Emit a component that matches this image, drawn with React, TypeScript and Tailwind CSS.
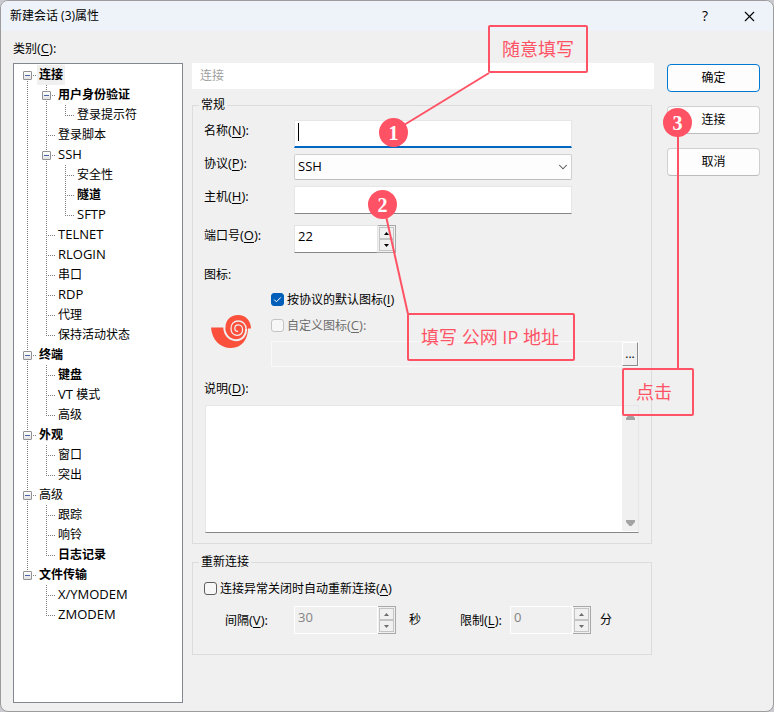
import { useState } from "react";
import type { ReactNode } from "react";
import { ChevronDown, X } from "lucide-react";

type TreeNode = {
	label: string;
	bold?: boolean;
	children?: TreeNode[];
};

const categories: TreeNode[] = [
	{
		label: "连接",
		bold: true,
		children: [
			{
				label: "用户身份验证",
				bold: true,
				children: [{ label: "登录提示符" }],
			},
			{ label: "登录脚本" },
			{
				label: "SSH",
				children: [
					{ label: "安全性" },
					{ label: "隧道", bold: true },
					{ label: "SFTP" },
				],
			},
			{ label: "TELNET" },
			{ label: "RLOGIN" },
			{ label: "串口" },
			{ label: "RDP" },
			{ label: "代理" },
			{ label: "保持活动状态" },
		],
	},
	{
		label: "终端",
		bold: true,
		children: [
			{ label: "键盘", bold: true },
			{ label: "VT 模式" },
			{ label: "高级" },
		],
	},
	{
		label: "外观",
		bold: true,
		children: [{ label: "窗口" }, { label: "突出" }],
	},
	{
		label: "高级",
		children: [
			{ label: "跟踪" },
			{ label: "响铃" },
			{ label: "日志记录", bold: true },
		],
	},
	{
		label: "文件传输",
		bold: true,
		children: [{ label: "X/YMODEM" }, { label: "ZMODEM" }],
	},
];

// One 19x20 cell of the dotted guide lines
function Guide({
	from,
	to,
	branch,
}: {
	from: number;
	to: number;
	branch?: boolean;
}) {
	return (
		<svg
			className="absolute inset-0"
			width="19"
			height="20"
			stroke="#808080"
			strokeDasharray="1 1"
			shapeRendering="crispEdges"
		>
			{to > from && <line x1="9.5" y1={from} x2="9.5" y2={to} />}
			{branch && <line x1="9" y1="10.5" x2="18" y2="10.5" />}
		</svg>
	);
}

// Latin runs are set one size larger than the Chinese text
function Mixed({ text }: { text: string }) {
	return text.split(/([A-Z/ ]+)/).map((part, i) => (
		<span key={i} className={i % 2 ? "whitespace-pre text-[13px]" : ""}>
			{part}
		</span>
	));
}

function Tree({
	nodes,
	trail = [],
	selected,
	onSelect,
}: {
	nodes: TreeNode[];
	trail?: boolean[];
	selected: string;
	onSelect: (path: string) => void;
}) {
	const [closed, setClosed] = useState<string[]>([]);

	const toggle = (label: string) => {
		setClosed((c) =>
			c.includes(label) ? c.filter((l) => l !== label) : [...c, label],
		);
	};

	return (
		<ul>
			{nodes.map((node, i) => {
				const last = i === nodes.length - 1;
				const first = i === 0 && trail.length === 0;
				const open = !closed.includes(node.label);
				return (
					<li key={node.label}>
						<div className="flex h-5 items-center">
							{trail.map((line, t) => (
								<span key={t} className="relative h-5 w-[19px] shrink-0">
									{line && <Guide from={0} to={20} />}
								</span>
							))}
							<span className="relative h-5 w-[19px] shrink-0">
								<Guide from={first ? 10 : 0} to={last ? 10 : 20} branch />
								{node.children && (
									<button
										type="button"
										aria-label={node.label}
										aria-expanded={open}
										className="absolute left-[5px] top-1.5 flex size-[9px] items-center justify-center rounded-[1px] border border-[#919191] bg-gradient-to-b from-white to-[#e2e2e2]"
										onClick={() => toggle(node.label)}
									>
										<svg width="5" height="5" fill="#4b63a7">
											<rect y="2" width="5" height="1" />
											{!open && <rect x="2" width="1" height="5" />}
										</svg>
									</button>
								)}
							</span>
							<button
								type="button"
								className={`h-5 whitespace-nowrap px-0.5 ${
									node.bold ? "font-bold" : ""
								} ${selected === node.label ? "bg-[#f0f0f0]" : ""}`}
								onClick={() => onSelect(node.label)}
							>
								<Mixed text={node.label} />
							</button>
						</div>
						{node.children && open && (
							<Tree
								nodes={node.children}
								trail={[...trail, !last]}
								selected={selected}
								onSelect={onSelect}
							/>
						)}
					</li>
				);
			})}
		</ul>
	);
}

// "(N):" with the access key underlined
function Key({ k, colon = true }: { k: string; colon?: boolean }) {
	return (
		<span className="text-[13px] leading-4">
			(<u className="underline-offset-2">{k}</u>){colon && ":"}
		</span>
	);
}

function Row({
	id,
	label,
	k,
	children,
}: {
	id: string;
	label: string;
	k: string;
	children: ReactNode;
}) {
	return (
		<div className="flex items-center pl-[11px] pr-[79px]">
			<label htmlFor={id} className="w-[90px] shrink-0 pb-2">
				{label}
				<Key k={k} />
			</label>
			{children}
		</div>
	);
}

function Spinner({
	id,
	value,
	onChange,
	disabled,
	className,
}: {
	id: string;
	value: number;
	onChange?: (value: number) => void;
	disabled?: boolean;
	className: string;
}) {
	const button =
		"flex flex-1 items-center justify-center border border-[#c4c4c4] bg-[#f0f0f0]";
	return (
		<div className={`flex h-7 ${className}`}>
			<input
				id={id}
				type="text"
				value={value}
				disabled={disabled}
				onChange={(e) => onChange?.(Number(e.target.value) || 0)}
				className="w-0 flex-1 border border-[#e4e4e4] border-b-[#868686] bg-white px-[3px] pb-1 text-[13px] disabled:border-white disabled:bg-[#f0f0f0] disabled:text-[#838383]"
			/>
			<div className="flex w-[18px] flex-col border border-l-0 border-[#a8a8a8] p-px">
				<button
					type="button"
					aria-label="增加"
					disabled={disabled}
					className={button}
					onClick={() => onChange?.(value + 1)}
				>
					<svg width="5" height="3" fill={disabled ? "#6d6d6d" : "#000"}>
						<path d="M0 3L2.5 0L5 3Z" />
					</svg>
				</button>
				<button
					type="button"
					aria-label="减少"
					disabled={disabled}
					className={button}
					onClick={() => onChange?.(value - 1)}
				>
					<svg width="5" height="3" fill={disabled ? "#6d6d6d" : "#000"}>
						<path d="M0 0L2.5 3L5 0Z" />
					</svg>
				</button>
			</div>
		</div>
	);
}

function Check({
	checked,
	onChange,
	disabled,
	children,
}: {
	checked: boolean;
	onChange?: (checked: boolean) => void;
	disabled?: boolean;
	children: ReactNode;
}) {
	return (
		<label
			className={`flex h-4 w-fit items-center gap-[3px] ${
				disabled ? "text-[#6d6d6d]" : ""
			}`}
		>
			<span className="relative flex size-[13px]">
				<input
					type="checkbox"
					checked={checked}
					disabled={disabled}
					onChange={(e) => onChange?.(e.target.checked)}
					className="size-[13px] appearance-none rounded-[3px] border border-[#5f5f5f] bg-[#f7f7f7] checked:border-[#005fb8] checked:bg-[#005fb8] disabled:border-[#c4c4c4]"
				/>
				{checked && (
					<svg
						className="pointer-events-none absolute inset-0"
						viewBox="0 0 13 13"
						fill="none"
						stroke="#fff"
					>
						<path d="M3.2 6.6L5.4 8.8L9.8 4.4" />
					</svg>
				)}
			</span>
			<span>{children}</span>
		</label>
	);
}

function Group({ title, children }: { title: string; children: ReactNode }) {
	return (
		<fieldset className="mr-0.5 min-w-0 border border-[#dcdcdc]">
			<legend className="ml-1.5 px-0.5">{title}</legend>
			{children}
		</fieldset>
	);
}

function ShellLogo() {
	return (
		<svg width="40" height="34" viewBox="0 0 40 34" fill="none">
			<path
				fill="#fb503b"
				d="M0 12.5H14.5C14.5 5 19.5 0 27 0C35 0 40 6 40 13.5H37C37 24 31 33 20 33C9 33 1 25 0 12.5Z"
			/>
			<path
				stroke="#f0f0f0"
				strokeWidth="2"
				d="M13.2 12C13.4 19.5 18 25.2 25 25.2C31.5 25.2 35.2 20 35.2 14"
			/>
			<path
				stroke="#f0f0f0"
				strokeWidth="1.3"
				d="M35.2 14.4C35.2 9 31.5 6 27.3 6C22.5 6 20 9.5 20 13.5C20 17.8 22.8 20.4 26.2 20.4C29.7 20.4 31.6 17.8 31.6 14.6C31.6 11.7 29.7 9.8 27.3 9.8C25 9.8 23.8 11.6 23.8 13.5C23.8 15.4 25 16.6 27 16.2"
			/>
		</svg>
	);
}

function Badge({ n, className }: { n: number; className: string }) {
	return (
		<span
			className={`absolute flex size-[29px] items-center justify-center rounded-full bg-[#ff5365] font-['Liberation_Serif',serif] text-xl font-bold text-white ${className}`}
		>
			{n}
		</span>
	);
}

function Note({ text, className }: { text: string; className: string }) {
	return (
		<span
			className={`absolute flex h-12 items-center whitespace-nowrap rounded-[2px] border-2 border-[#ff5365] px-3 text-lg text-[#ff5365] ${className}`}
		>
			{text}
		</span>
	);
}

// Numbered notes that lie over the dialog
function Notes() {
	return (
		<div className="pointer-events-none absolute inset-0">
			<svg
				className="absolute inset-0 size-full"
				stroke="#ff5365"
				strokeWidth="2"
			>
				<line x1="404" y1="125" x2="489" y2="73" />
				<line x1="386" y1="216" x2="408" y2="314" />
				<line x1="678" y1="136" x2="678" y2="369" />
			</svg>
			<Note text="随意填写" className="left-[488px] top-[25px]" />
			<Note text="填写 公网 IP 地址" className="left-[407px] top-[313px] w-[168px]" />
			<Note text="点击" className="left-[622px] top-[368px] w-[72px]" />
			<Badge n={1} className="left-[379px] top-[118px]" />
			<Badge n={2} className="left-[368px] top-[190px]" />
			<Badge n={3} className="left-[663px] top-[108px]" />
		</div>
	);
}

function App() {
	const [selected, setSelected] = useState("连接");
	const [name, setName] = useState("");
	const [host, setHost] = useState("");
	const [port, setPort] = useState(22);
	const [defaultIcon, setDefaultIcon] = useState(true);
	const [reconnect, setReconnect] = useState(false);

	const field =
		"h-7 w-full border border-[#e6e6e6] border-b-[#868686] bg-white px-[3px] text-[13px] outline-none";
	const action =
		"h-7 rounded-[4px] border border-[#d0d0d0] border-b-[#bcbcbc] bg-[#fdfdfd]";

	return (
		<div className="relative flex min-h-screen bg-[#c9cbd0] font-['Open_Sans','Noto_Sans_CJK_SC',sans-serif] text-xs text-black">
			<div className="flex flex-1 flex-col overflow-hidden rounded-lg border border-[#9c9c9c] bg-[#f0f0f0]">
				<header className="flex h-[30px] items-center bg-[#eef3f9] pl-[9px] pr-[15px]">
					<h1 className="flex-1">新建会话 (3)属性</h1>
					<button
						type="button"
						className="mr-7 w-4 text-sm font-medium"
						aria-label="帮助"
					>
						?
					</button>
					<button type="button" aria-label="关闭">
						<X size={17} strokeWidth={1.5} />
					</button>
				</header>

				<main className="flex flex-1 pb-2 pl-3 pr-[13px]">
					<nav className="flex w-[170px] shrink-0 flex-col pt-[9px]">
						<h2 className="h-4">
							类别
							<Key k="C" />
						</h2>
						<div className="mt-[7px] flex-1 border border-[#828790] bg-white pl-1 pt-px">
							<Tree
								nodes={categories}
								selected={selected}
								onSelect={setSelected}
							/>
						</div>
					</nav>

					<form
						className="ml-[9px] flex min-w-0 flex-1 flex-col pt-8"
						onSubmit={(e) => e.preventDefault()}
					>
						<div className="mb-2 flex h-[26px] items-center bg-white px-2 text-[#a0a0a0]">
							连接
						</div>

						<Group title="常规">
							<div className="mt-[7px] flex flex-col gap-1.5">
								<Row id="name" label="名称" k="N">
									<div className="relative flex-1">
										<input
											id="name"
											type="text"
											value={name}
											onChange={(e) => setName(e.target.value)}
											className="block h-7 w-full border border-b-2 border-[#e6e6e6] border-b-[#0067c0] bg-white px-[3px] text-[13px] caret-transparent outline-none"
										/>
										{name === "" && (
											<span className="absolute left-1 top-[3px] h-[18px] w-px bg-black" />
										)}
									</div>
								</Row>
								<Row id="protocol" label="协议" k="P">
									<div className="relative flex-1">
										<select
											id="protocol"
											className="block h-[26px] w-full appearance-none rounded-[2px] border border-[#d0d0d0] border-b-[#bcbcbc] bg-[#fdfdfd] px-[3px] text-[13px]"
										>
											<option>SSH</option>
											<option>TELNET</option>
											<option>RLOGIN</option>
											<option>SFTP</option>
										</select>
										<ChevronDown
											size={14}
											strokeWidth={1.8}
											className="pointer-events-none absolute right-0.5 top-1.5 text-[#505050]"
										/>
									</div>
								</Row>
								<Row id="host" label="主机" k="H">
									<input
										id="host"
										type="text"
										value={host}
										onChange={(e) => setHost(e.target.value)}
										className={field}
									/>
								</Row>
							</div>
							<div className="mt-[11px]">
								<Row id="port" label="端口号" k="O">
									<Spinner
										id="port"
										value={port}
										onChange={setPort}
										className="w-[102px]"
									/>
								</Row>
							</div>

							<p className="mt-3.5 pl-[11px]">图标:</p>
							<div className="mt-2 flex">
								<div className="w-[78px] shrink-0 pl-[18px] pt-6">
									<ShellLogo />
								</div>
								<div className="flex min-w-0 flex-1 flex-col pr-3">
									<Check checked={defaultIcon} onChange={setDefaultIcon}>
										按协议的默认图标
										<Key k="I" colon={false} />
									</Check>
									<div className="mt-2.5">
										<Check checked={false} disabled>
											自定义图标
											<Key k="C" />
										</Check>
									</div>
									<div className="mt-2 flex h-[26px] border border-[#f9f9f9]">
										<input
											type="text"
											aria-label="图标路径"
											disabled
											className="min-w-0 flex-1"
										/>
										<button
											type="button"
											className="w-4 border border-white border-b-[#8c8c8c] border-r-[#8c8c8c] leading-none"
										>
											...
										</button>
									</div>
								</div>
							</div>

							<label htmlFor="note" className="mt-[13px] block pl-[11px]">
								说明
								<Key k="D" />
							</label>
							<div className="mx-3 mb-2.5 mt-2 flex h-32 border border-[#e6e6e6] border-b-[#868686] bg-white">
								<textarea
									id="note"
									className="min-w-0 flex-1 resize-none px-1 outline-none"
								/>
								<div className="mb-px flex w-4 flex-col items-center justify-between bg-[#f0f0f0] pb-1 pt-2 text-[#a3a3a3]">
									<svg width="9" height="7" fill="currentColor">
										<path d="M0 6V4L3.5 0H5.5L9 4V6Z" />
									</svg>
									<svg width="9" height="7" fill="currentColor">
										<path d="M0 0V2L3.5 6H5.5L9 2V0Z" />
									</svg>
								</div>
							</div>
						</Group>

						<div className="mt-2.5">
							<Group title="重新连接">
								<div className="mt-2.5 pl-[11px]">
									<Check checked={reconnect} onChange={setReconnect}>
										连接异常关闭时自动重新连接
										<Key k="A" colon={false} />
									</Check>
								</div>
								<div className="mb-5 mt-2.5 flex items-center pl-8">
									<label htmlFor="interval" className="w-[69px]">
										间隔
										<Key k="V" />
									</label>
									<Spinner
										id="interval"
										value={30}
										disabled={!reconnect}
										className="w-[102px]"
									/>
									<span className="ml-[13px] w-[51px]">秒</span>
									<label htmlFor="limit" className="w-[50px]">
										限制
										<Key k="L" />
									</label>
									<Spinner
										id="limit"
										value={0}
										disabled={!reconnect}
										className="w-[81px]"
									/>
									<span className="ml-[9px]">分</span>
								</div>
							</Group>
						</div>
					</form>

					<div className="ml-[13px] flex w-[93px] shrink-0 flex-col gap-3.5 pt-[33px]">
						<button
							type="button"
							className="h-7 rounded-[4px] border border-[#0078d4] bg-[#fdfdfd]"
						>
							确定
						</button>
						<button type="button" className={action}>
							连接
						</button>
						<button type="button" className={action}>
							取消
						</button>
					</div>
				</main>
			</div>
			<Notes />
		</div>
	);
}

export default App;
